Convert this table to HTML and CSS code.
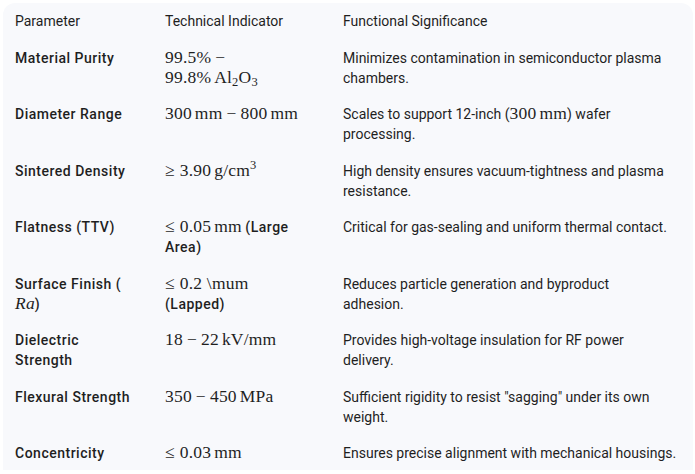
FILE: index.html
```html
<!DOCTYPE html>
<html>
<head>
<meta charset="utf-8">
<link rel="stylesheet" href="styles.css">
</head>
<body>
<div class="card">
<table class="spec">
<colgroup><col class="c1"><col class="c2"><col class="c3"></colgroup>
<thead>
<tr><th>Parameter</th><th>Technical Indicator</th><th>Functional Significance</th></tr>
</thead>
<tbody>
<tr>
<td class="lbl">Material Purity</td>
<td><span class="m">99.5%<span class="bin">−</span></span><br><span class="m">99.8%<span class="th"></span>Al<sub>2</sub>O<sub>3</sub></span></td>
<td>Minimizes contamination in semiconductor plasma<br>chambers.</td>
</tr>
<tr>
<td class="lbl">Diameter Range</td>
<td><span class="m">300<span class="th"></span>mm<span class="bin">−</span>800<span class="th"></span>mm</span></td>
<td>Scales to support 12-inch (<span class="m">300<span class="th"></span>mm</span>) wafer<br>processing.</td>
</tr>
<tr>
<td class="lbl">Sintered Density</td>
<td><span class="m"><span class="rel">≥</span>3.90<span class="th"></span>g/cm<sup>3</sup></span></td>
<td>High density ensures vacuum-tightness and plasma<br>resistance.</td>
</tr>
<tr>
<td class="lbl">Flatness (TTV)</td>
<td><span class="m"><span class="rel">≤</span>0.05<span class="th"></span>mm</span> <b>(Large<br>Area)</b></td>
<td>Critical for gas-sealing and uniform thermal contact.</td>
</tr>
<tr>
<td class="lbl">Surface Finish (<br><span class="m it">Ra</span>)</td>
<td><span class="m"><span class="rel">≤</span>0.2 \mum</span><br><b>(Lapped)</b></td>
<td>Reduces particle generation and byproduct<br>adhesion.</td>
</tr>
<tr>
<td class="lbl">Dielectric<br>Strength</td>
<td><span class="m">18<span class="bin">−</span>22<span class="th"></span>kV/mm</span></td>
<td>Provides high-voltage insulation for RF power<br>delivery.</td>
</tr>
<tr>
<td class="lbl">Flexural Strength</td>
<td><span class="m">350<span class="bin">−</span>450<span class="th"></span>MPa</span></td>
<td>Sufficient rigidity to resist "sagging" under its own<br>weight.</td>
</tr>
<tr>
<td class="lbl">Concentricity</td>
<td><span class="m"><span class="rel">≤</span>0.03<span class="th"></span>mm</span></td>
<td>Ensures precise alignment with mechanical housings.</td>
</tr>
</tbody>
</table>
</div>
</body>
</html>
```
FILE: styles.css
```css
html, body {
  margin: 0;
  padding: 0;
  background: #ffffff;
}
body {
  padding: 3px 2px 0 3px;
  font-family: Roboto, "Noto Sans", sans-serif;
  font-size: 14px;
  line-height: 20px;
  color: #1f1f1f;
}
.card {
  background: #f8f9fc;
  border-radius: 12px 12px 0 0;
  width: 690px;
  height: 467px;
  overflow: hidden;
}
.spec {
  border-collapse: collapse;
  table-layout: fixed;
  width: 690px;
}
.c1 { width: 150px; }
.c2 { width: 178px; }
.spec th, .spec td {
  padding: 8.25px 12px;
  text-align: left;
  vertical-align: top;
  white-space: nowrap;
}
.spec th {
  font-weight: 400;
}
.spec td:last-child, .spec th:last-child {
  padding-right: 2px;
}
.lbl, .spec b {
  font-weight: 500;
  letter-spacing: 0.5px;
}
.m {
  font-family: "Liberation Serif", "DejaVu Serif", serif;
  font-size: 17.5px;
  line-height: 1;
  letter-spacing: 0.2px;
  white-space: nowrap;
}
.bin {
  margin: 0 4px;
}
.rel {
  margin-right: 5px;
}
.th {
  display: inline-block;
  width: 3px;
}
.it {
  font-style: italic;
}
.m sub, .m sup {
  font-size: 12.5px;
  line-height: 0;
}
.m sub { vertical-align: -3px; }
.m sup { vertical-align: 7px; }
```
